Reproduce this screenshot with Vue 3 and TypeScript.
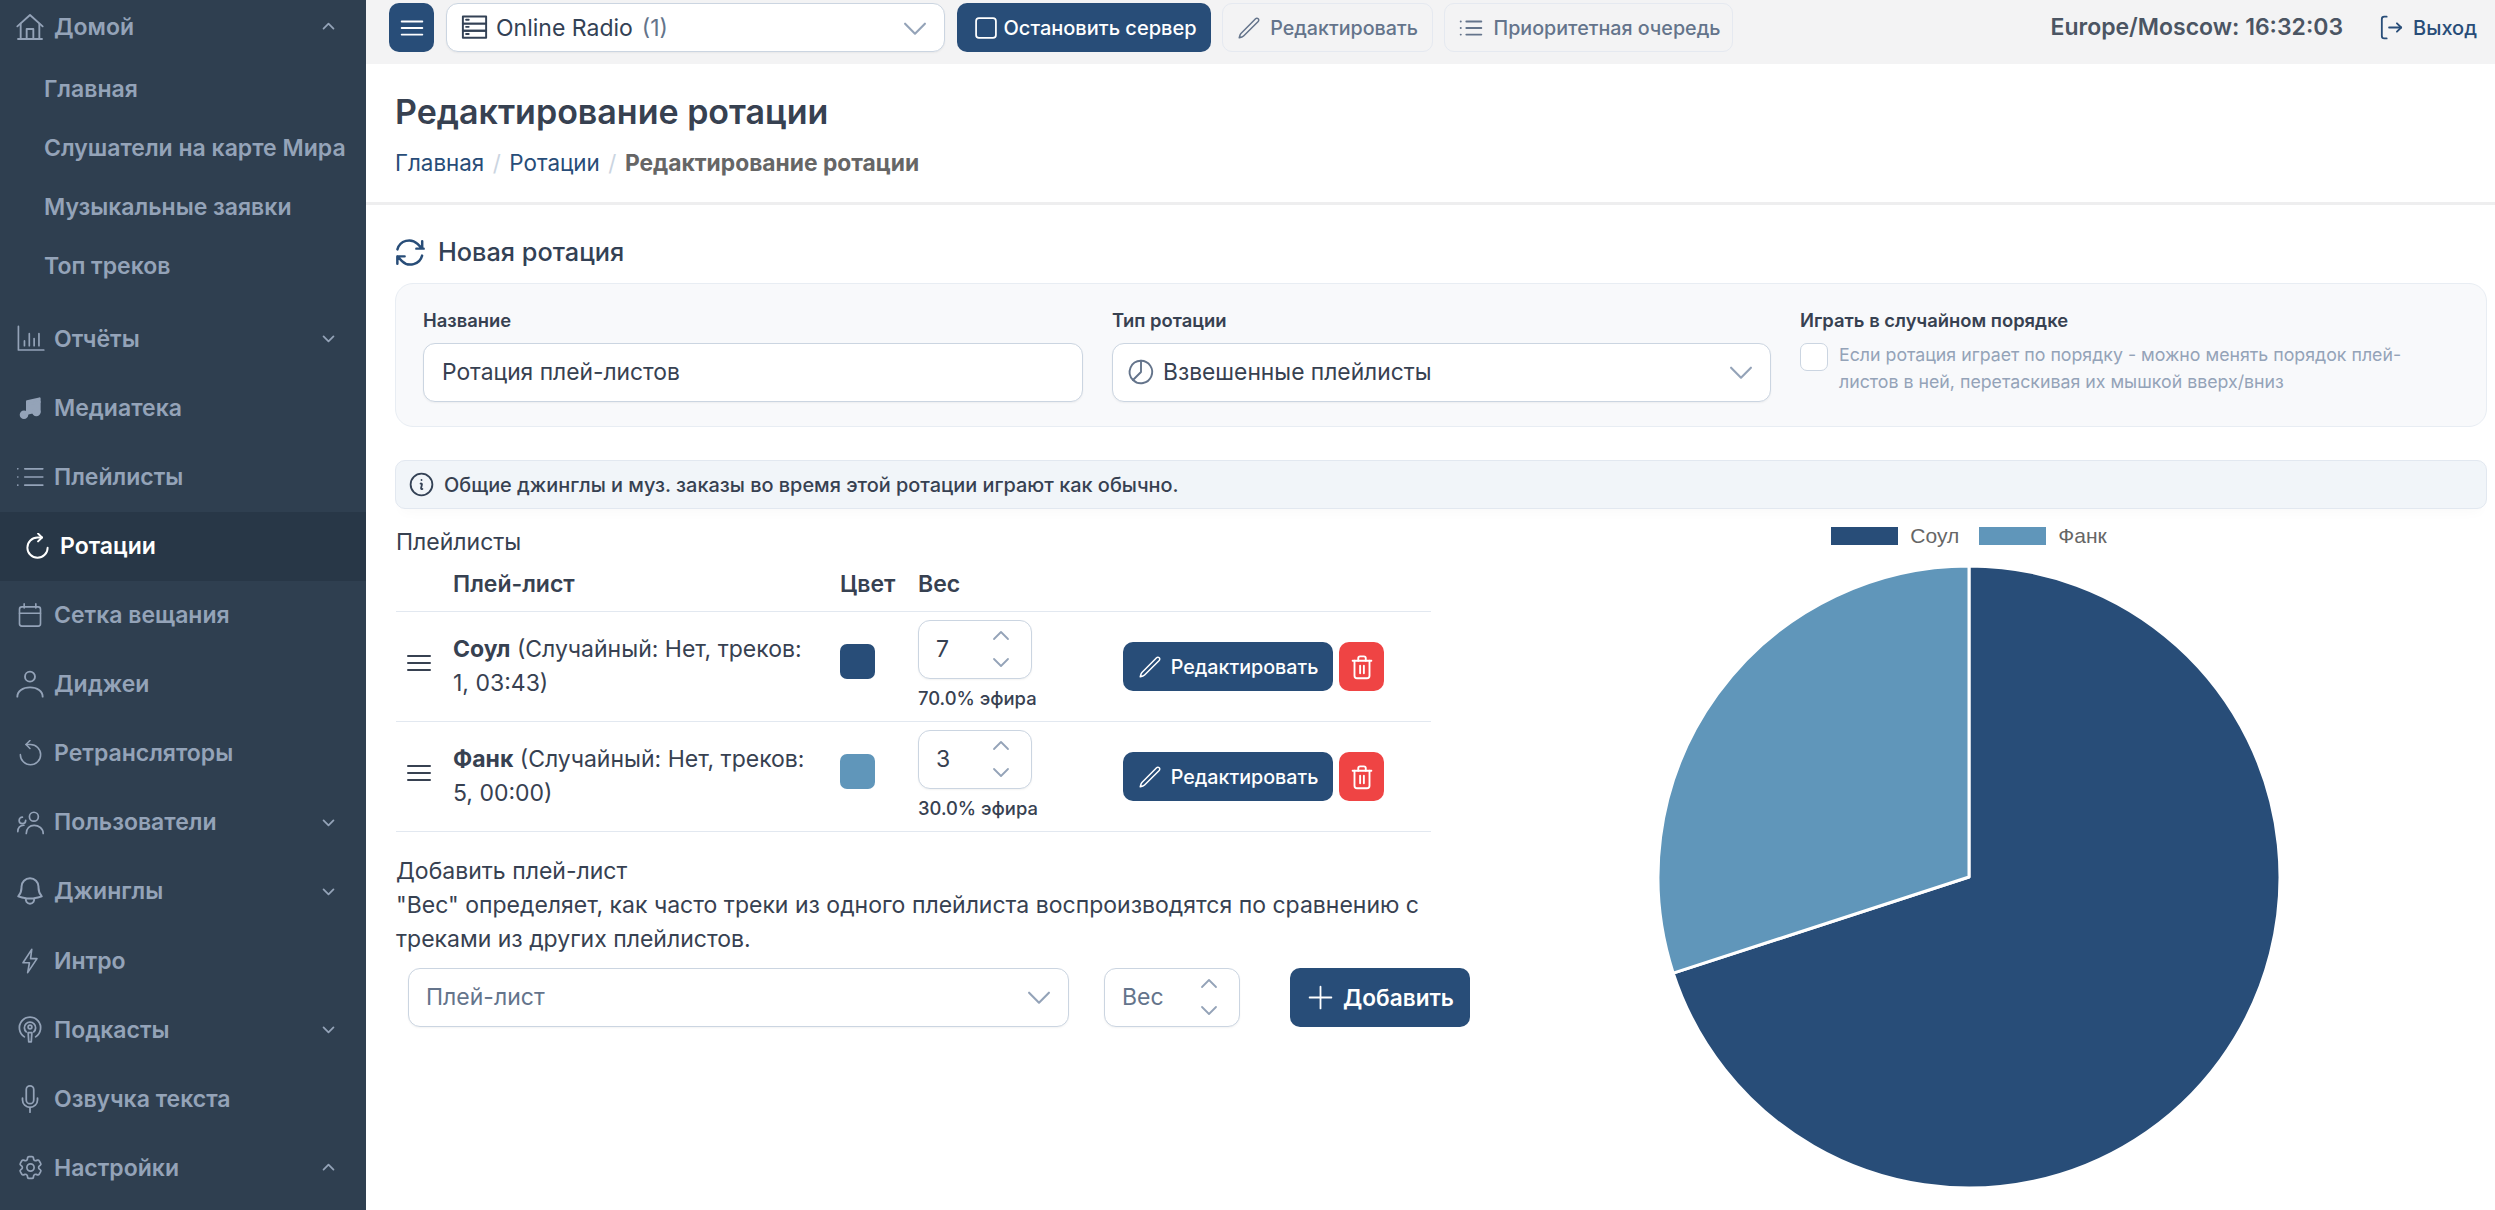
<script setup lang="ts">
type IconName = keyof typeof icons

const icons = {
  home: ['M2.5 11.5 12 3l9.5 8.5', 'M5 9.5V21h14V9.5', 'M3 21h18', 'M9.5 21v-7.5h5V21'],
  chart: ['M2 2v19.5h21', 'M7 14v4', 'M11 8v10', 'M15 12v6', 'M19 8v10'],
  list: ['M8.25 6.75h12M8.25 12h12m-12 5.25h12', 'M3.75 6.75h.1M3.75 12h.1M3.75 17.25h.1'],
  navlist: ['M7.5 5h15.5M7.5 12h15.5M7.5 19h15.5', 'M1.5 5h.1M1.5 12h.1M1.5 19h.1'],
  rotate: ['M16 4h-4a9 9 0 1 0 9 9', 'M12.5 .5 16 4l-3.5 3.5'],
  calendar: ['M7 2.5v3.5M17 2.5v3.5', 'M5 5h14a2 2 0 0 1 2 2v12.5a2 2 0 0 1-2 2H5a2 2 0 0 1-2-2V7a2 2 0 0 1 2-2Z', 'M3 10.5h18'],
  user: ['M15.75 6.5a3.75 3.75 0 1 1-7.5 0 3.75 3.75 0 0 1 7.5 0Z', 'M2.5 21.5c0-4 4-7 9.5-7s9.5 3 9.5 7'],
  replay: ['M8 4h4a9 9 0 1 1-9 9', 'M11.5 .5 8 4l3.5 3.5'],
  users: ['M18.5 7.2a3.7 3.7 0 1 1-7.4 0 3.7 3.7 0 0 1 7.4 0Z', 'M8.5 21c0-4 2.8-6.7 6.5-6.7s7.5 2.7 7.5 6.7', 'M8 10.3a2.7 2.7 0 1 1-2.7-2.7', 'M1.5 19.5c0-3 1.8-5 5-5.2'],
  bell: ['M14.857 17.082a23.848 23.848 0 0 0 5.454-1.31A8.967 8.967 0 0 1 18 9.75V9A6 6 0 0 0 6 9v.75a8.967 8.967 0 0 1-2.312 6.022c1.733.64 3.56 1.085 5.455 1.31m5.714 0a24.255 24.255 0 0 1-5.714 0m5.714 0a3 3 0 1 1-5.714 0'],
  bolt: ['M13.5 2 6 13.5h5.5L10 22l8-12h-5.5L13.5 2Z'],
  podcast: ['M7.5 17.5a8.5 8.5 0 1 1 9 0', 'M9 13.5a4.5 4.5 0 1 1 6 0', 'M13.5 9.5a1.5 1.5 0 1 1-3 0 1.5 1.5 0 0 1 3 0Z', 'M10.5 14h3l-.5 7.5h-2Z'],
  mic: ['M18 11.25v1.5a6 6 0 0 1-12 0v-1.5', 'M12 18.75v3.75', 'M12 15.75a3 3 0 0 1-3-3V4.5a3 3 0 1 1 6 0v8.25a3 3 0 0 1-3 3Z'],
  cog: ['M9.594 3.94c.09-.542.56-.94 1.11-.94h2.593c.55 0 1.02.398 1.11.94l.213 1.281c.063.374.313.686.645.87.074.04.147.083.22.127.325.196.72.257 1.075.124l1.217-.456a1.125 1.125 0 0 1 1.37.49l1.296 2.247a1.125 1.125 0 0 1-.26 1.431l-1.003.827c-.293.241-.438.613-.43.992a7.723 7.723 0 0 1 0 .255c-.008.378.137.75.43.991l1.004.827c.424.35.534.955.26 1.43l-1.298 2.247a1.125 1.125 0 0 1-1.369.491l-1.217-.456c-.355-.133-.75-.072-1.076.124a6.47 6.47 0 0 1-.22.128c-.331.183-.581.495-.644.869l-.213 1.281c-.09.543-.56.94-1.11.94h-2.594c-.55 0-1.019-.398-1.11-.94l-.213-1.281c-.062-.374-.312-.686-.644-.87a6.52 6.52 0 0 1-.22-.127c-.325-.196-.72-.257-1.076-.124l-1.217.456a1.125 1.125 0 0 1-1.369-.49l-1.297-2.247a1.125 1.125 0 0 1 .26-1.431l1.004-.827c.292-.24.437-.613.43-.991a6.932 6.932 0 0 1 0-.255c.007-.38-.138-.751-.43-.992l-1.004-.827a1.125 1.125 0 0 1-.26-1.43l1.297-2.247a1.125 1.125 0 0 1 1.37-.491l1.216.456c.356.133.751.072 1.076-.124.072-.044.146-.086.22-.128.332-.183.582-.495.644-.869l.214-1.28Z', 'M15 12a3 3 0 1 1-6 0 3 3 0 0 1 6 0Z'],
  music: ['M9 18.5V6.5l11-2.5v12', 'M9 9.5l11-2.5', 'M9 18.5a2.8 2.8 0 1 1-5.6 0 2.8 2.8 0 0 1 5.6 0Z', 'M20 16a2.8 2.8 0 1 1-5.6 0 2.8 2.8 0 0 1 5.6 0Z'],
  up: ['m5 15 7-7 7 7'],
  down: ['m5 9 7 7 7-7'],
  bars: ['M3.75 6.75h16.5M3.75 12h16.5M3.75 17.25h16.5'],
  server: ['M3 3.5h18v5.5H3Z', 'M3 9h18v5.5H3Z', 'M3 14.5h18V20H3Z', 'M5.5 6h2M5.5 11.5h2M5.5 17h2'],
  stop: ['M6 3.5h12A2.5 2.5 0 0 1 20.5 6v12a2.5 2.5 0 0 1-2.5 2.5H6A2.5 2.5 0 0 1 3.5 18V6A2.5 2.5 0 0 1 6 3.5Z'],
  pencil: ['M16.862 4.487l1.687-1.688a1.875 1.875 0 1 1 2.652 2.652L6.832 19.82a4.5 4.5 0 0 1-1.897 1.13l-2.685.8.8-2.685a4.5 4.5 0 0 1 1.13-1.897L16.863 4.487Z'],
  logout: ['M8 3H6a2 2 0 0 0-2 2v14a2 2 0 0 0 2 2h2', 'M10 12h10', 'M16.5 8.5 20 12l-3.5 3.5'],
  sync: ['M16.023 9.348h4.992M20.015 4.356v4.99l-3.181-3.182a8.25 8.25 0 0 0-13.803 3.7', 'M2.985 19.644v-4.992h4.992m-4.993 0 3.181 3.183a8.25 8.25 0 0 0 13.803-3.7'],
  pie: ['M12 3a9 9 0 1 1-6.4 15.4A9 9 0 0 1 12 3Z', 'M12 3v9l-6.4 6.4'],
  info: ['M11.25 11.25l.041-.02a.75.75 0 0 1 1.063.852l-.708 2.836a.75.75 0 0 0 1.063.853l.041-.021', 'M21 12a9 9 0 1 1-18 0 9 9 0 0 1 18 0Z', 'M12 8.25h.01'],
  trash: ['M4.5 7h15', 'M9 7V5a1.5 1.5 0 0 1 1.5-1.5h3A1.5 1.5 0 0 1 15 5v2', 'M6 7v12a2 2 0 0 0 2 2h8a2 2 0 0 0 2-2V7', 'M10.5 11v6', 'M13.5 11v6'],
  plus: ['M12 3v18M3 12h18'],
}

interface NavItem {
  label: string
  icon: IconName
  size: number
  caret?: 'up' | 'down'
  active?: boolean
  children?: string[]
}

const nav: NavItem[] = [
  { label: 'Домой', icon: 'home', size: 32, caret: 'up', children: ['Главная', 'Слушатели на карте Мира', 'Музыкальные заявки', 'Топ треков'] },
  { label: 'Отчёты', icon: 'chart', size: 29, caret: 'down' },
  { label: 'Медиатека', icon: 'music', size: 27 },
  { label: 'Плейлисты', icon: 'navlist', size: 28 },
  { label: 'Ротации', icon: 'rotate', size: 27, active: true },
  { label: 'Сетка вещания', icon: 'calendar', size: 28 },
  { label: 'Диджеи', icon: 'user', size: 32 },
  { label: 'Ретрансляторы', icon: 'replay', size: 27 },
  { label: 'Пользователи', icon: 'users', size: 29, caret: 'down' },
  { label: 'Джинглы', icon: 'bell', size: 34, caret: 'down' },
  { label: 'Интро', icon: 'bolt', size: 28 },
  { label: 'Подкасты', icon: 'podcast', size: 30, caret: 'down' },
  { label: 'Озвучка текста', icon: 'mic', size: 30 },
  { label: 'Настройки', icon: 'cog', size: 29, caret: 'up' },
]

const playlists = [
  { name: 'Соул', info: '(Случайный: Нет, треков: 1, 03:43)', color: '#284d78', weight: 7, share: '70.0% эфира' },
  { name: 'Фанк', info: '(Случайный: Нет, треков: 5, 00:00)', color: '#6096ba', weight: 3, share: '30.0% эфира' },
]

const total = playlists.reduce((sum, p) => sum + p.weight, 0)
const R = 311
const slices = (() => {
  let start = 0
  return playlists.map((p) => {
    const end = start + (p.weight / total) * Math.PI * 2
    const point = (a: number) => `${R * Math.sin(a)} ${-R * Math.cos(a)}`
    const large = end - start > Math.PI ? 1 : 0
    const d = `M0 0L${point(start)}A${R} ${R} 0 ${large} 1 ${point(end)}Z`
    start = end
    return { d, color: p.color, name: p.name }
  })
})()
</script>

<template>
  <div class="app">
    <aside class="sidebar">
      <nav class="nav">
        <template v-for="item in nav" :key="item.label">
          <div class="nav-item" :class="{ active: item.active }">
            <span class="nav-slot">
              <svg :class="{ solid: item.icon === 'music' }" :style="{ width: item.size + 'px', height: item.size + 'px' }" viewBox="0 0 24 24"><path v-for="d in icons[item.icon]" :key="d" :d="d" /></svg>
            </span>
            <span class="nav-label">{{ item.label }}</span>
            <svg v-if="item.caret" class="nav-caret" viewBox="0 0 24 24"><path v-for="d in icons[item.caret]" :key="d" :d="d" /></svg>
          </div>
          <div v-if="item.children" class="subnav">
            <div v-for="child in item.children" :key="child" class="sub-item">{{ child }}</div>
          </div>
        </template>
      </nav>
    </aside>

    <main class="main">
      <header class="topbar">
        <button class="btn primary burger"><svg class="ic30" viewBox="0 0 24 24"><path v-for="d in icons.bars" :key="d" :d="d" /></svg></button>
        <div class="top-select">
          <svg class="ic31 dark" viewBox="0 0 24 24"><path v-for="d in icons.server" :key="d" :d="d" /></svg>
          <span class="station">Online Radio</span>
          <span class="station-count">(1)</span>
          <svg class="chev" viewBox="0 0 24 24"><path v-for="d in icons.down" :key="d" :d="d" /></svg>
        </div>
        <button class="btn primary stop"><svg class="ic28" viewBox="0 0 24 24"><path v-for="d in icons.stop" :key="d" :d="d" /></svg>Остановить сервер</button>
        <button class="btn ghost edit"><svg class="ic24" viewBox="0 0 24 24"><path v-for="d in icons.pencil" :key="d" :d="d" /></svg>Редактировать</button>
        <button class="btn ghost queue"><svg class="ic30" viewBox="0 0 24 24"><path v-for="d in icons.list" :key="d" :d="d" /></svg>Приоритетная очередь</button>
        <div class="clock">Europe/Moscow: 16:32:03</div>
        <a class="logout"><svg class="ic29" viewBox="0 0 24 24"><path v-for="d in icons.logout" :key="d" :d="d" /></svg>Выход</a>
      </header>

      <section class="page-head">
        <h1>Редактирование ротации</h1>
        <div class="crumbs">
          <a>Главная</a><i>/</i><a>Ротации</a><i>/</i><b>Редактирование ротации</b>
        </div>
      </section>

      <section class="card">
        <h2><svg class="sync" viewBox="0 0 24 24"><path v-for="d in icons.sync" :key="d" :d="d" /></svg>Новая ротация</h2>

        <div class="panel">
          <div class="field">
            <label>Название</label>
            <div class="control">Ротация плей-листов</div>
          </div>
          <div class="field">
            <label>Тип ротации</label>
            <div class="control select pie-select">
              <svg class="ic30 slate" viewBox="0 0 24 24"><path v-for="d in icons.pie" :key="d" :d="d" /></svg>
              <span>Взвешенные плейлисты</span>
              <svg class="chev" viewBox="0 0 24 24"><path v-for="d in icons.down" :key="d" :d="d" /></svg>
            </div>
          </div>
          <div class="field">
            <label>Играть в случайном порядке</label>
            <div class="check-row">
              <span class="check"></span>
              <p>Если ротация играет по порядку - можно менять порядок плей-листов в ней, перетаскивая их мышкой вверх/вниз</p>
            </div>
          </div>
        </div>

        <div class="alert"><svg class="ic29 info" viewBox="0 0 24 24"><path v-for="d in icons.info" :key="d" :d="d" /></svg>Общие джинглы и муз. заказы во время этой ротации играют как обычно.</div>

        <div class="columns">
          <div class="left">
            <div class="caption">Плейлисты</div>
            <div class="table">
              <div class="row head">
                <span></span><span>Плей-лист</span><span>Цвет</span><span>Вес</span><span></span>
              </div>
              <div v-for="p in playlists" :key="p.name" class="row body">
                <svg class="drag" viewBox="0 0 24 24"><path v-for="d in icons.bars" :key="d" :d="d" /></svg>
                <div class="pl-name"><b>{{ p.name }}</b> {{ p.info }}</div>
                <span class="swatch" :style="{ background: p.color }"></span>
                <div class="weight">
                  <div class="number">
                    <span>{{ p.weight }}</span>
                    <div class="spin">
                      <svg viewBox="0 0 24 24"><path v-for="d in icons.up" :key="d" :d="d" /></svg>
                      <svg viewBox="0 0 24 24"><path v-for="d in icons.down" :key="d" :d="d" /></svg>
                    </div>
                  </div>
                  <small>{{ p.share }}</small>
                </div>
                <div class="actions">
                  <button class="btn primary row-edit"><svg class="ic24" viewBox="0 0 24 24"><path v-for="d in icons.pencil" :key="d" :d="d" /></svg>Редактировать</button>
                  <button class="btn danger"><svg class="ic30" viewBox="0 0 24 24"><path v-for="d in icons.trash" :key="d" :d="d" /></svg></button>
                </div>
              </div>
            </div>

            <div class="add-title">Добавить плей-лист</div>
            <p class="hint">"Вес" определяет, как часто треки из одного плейлиста воспроизводятся по сравнению с треками из других плейлистов.</p>
            <div class="add-form">
              <div class="control select add-select">
                <span class="placeholder">Плей-лист</span>
                <svg class="chev" viewBox="0 0 24 24"><path v-for="d in icons.down" :key="d" :d="d" /></svg>
              </div>
              <div class="number add-number">
                <span class="placeholder">Вес</span>
                <div class="spin">
                  <svg viewBox="0 0 24 24"><path v-for="d in icons.up" :key="d" :d="d" /></svg>
                  <svg viewBox="0 0 24 24"><path v-for="d in icons.down" :key="d" :d="d" /></svg>
                </div>
              </div>
              <button class="btn primary add-btn"><svg class="ic29" viewBox="0 0 24 24"><path v-for="d in icons.plus" :key="d" :d="d" /></svg>Добавить</button>
            </div>
          </div>

          <div class="chart">
            <div class="legend">
              <span v-for="p in playlists" :key="p.name" class="legend-item"><i :style="{ background: p.color }"></i>{{ p.name }}</span>
            </div>
            <svg class="pie" viewBox="-314 -314 628 628">
              <path v-for="s in slices" :key="s.name" :d="s.d" :fill="s.color" stroke="#fff" stroke-width="3" />
            </svg>
          </div>
        </div>
      </section>
    </main>
  </div>
</template>

<style>
html, body { margin: 0; background: #fff; overflow: hidden; }
</style>

<style scoped>
* { box-sizing: border-box; }
svg { fill: none; stroke: currentColor; stroke-width: 1.5; stroke-linecap: round; stroke-linejoin: round; flex: none; }
p, h1, h2 { margin: 0; }

.app { display: flex; width: 2495px; height: 1210px; overflow: hidden; font-family: Inter, "Noto Sans", sans-serif; color: #374151; }

.sidebar { width: 366px; flex: none; background: #2f3f50; overflow: hidden; }
.nav { margin-top: -8px; }
.nav-item { height: 69.08px; display: flex; align-items: center; padding: 0 29px 0 17px; color: #94a3b8; font-size: 23px; font-weight: 600; }
.nav-slot { width: 26px; height: 26px; margin-right: 11px; display: flex; align-items: center; justify-content: center; flex: none; }
.nav-slot svg { stroke-width: 1.4; display: block; }
.nav-slot svg.solid path { fill: currentColor; stroke-width: 2; }
.nav-label { flex: 1; }
.nav-caret { width: 17px; height: 17px; stroke-width: 2.5; }
.nav-item.active { background: #283747; color: #fff; padding-left: 24px; }
.nav-item.active .nav-slot { margin-right: 10px; }
.nav-item.active .nav-slot svg { stroke-width: 1.7; }
.subnav { margin-top: -1px; padding-bottom: 9px; }
.sub-item { height: 58.8px; display: flex; align-items: center; padding-left: 44px; color: #94a3b8; font-size: 23px; font-weight: 600; }

.main { flex: 1; min-width: 0; }

.topbar { height: 64px; background: #f3f3f4; display: flex; align-items: flex-start; padding: 3px 18px 0 23px; }
.btn { display: inline-flex; align-items: center; justify-content: center; border: 1px solid transparent; border-radius: 10px; font: inherit; }
.btn.primary { background: #284d78; color: #fff; }
.btn.ghost { background: #f3f3f4; border-color: #e5e9f0; color: #64748b; font-weight: 500; }
.btn.danger { background: #ef4444; color: #fff; width: 45px; height: 49px; }
.burger { width: 45px; height: 49px; margin-right: 12px; }
.top-select { width: 499px; height: 49px; background: #fff; border: 1px solid #cbd5e1; border-radius: 12px; display: flex; align-items: center; padding: 0 12px 0 12px; box-shadow: 0 1px 2px rgba(0,0,0,.05); color: #334155; font-size: 23px; }
.station { margin-left: 6px; }
.station-count { margin-left: 9px; color: #64748b; }
.chev { margin-left: auto; width: 34px; height: 34px; color: #94a3b8; }
.stop { width: 254px; height: 49px; margin-left: 12px; font-size: 20px; font-weight: 500; gap: 4px; }
.edit { width: 211px; height: 49px; margin-left: 11px; font-size: 19.7px; gap: 9px; }
.queue { width: 289px; height: 49px; margin-left: 11px; font-size: 19.7px; gap: 7px; }
.clock { margin-left: auto; font-size: 23px; font-weight: 600; color: #4b5563; line-height: 49px; }
.logout { display: flex; align-items: center; gap: 7px; height: 49px; margin-left: 34px; color: #284d78; font-size: 20px; font-weight: 500; }
.ic24 { width: 24px; height: 24px; }
.ic28 { width: 28px; height: 28px; }
.ic29 { width: 29px; height: 29px; }
.ic30 { width: 30px; height: 30px; }
.ic31 { width: 31px; height: 31px; }
.dark { color: #334155; }
.slate { color: #64748b; }
.info { color: #334155; }

.page-head { height: 138px; padding: 28px 29px 0; background: #fff; }
h1 { font-size: 34px; font-weight: 600; line-height: 40px; color: #374151; }
.crumbs { display: flex; align-items: center; margin-top: 15px; font-size: 22.4px; line-height: 32px; color: #284d78; }
.crumbs i { margin: 0 8.5px; color: #cbd5e1; font-style: normal; }
.crumbs b { font-weight: 700; font-size: 22.8px; color: #666; }

.card { border-top: 3px solid #eeeeef; padding: 27px 8px 0 29px; }
h2 { display: flex; align-items: center; gap: 10px; font-size: 25.3px; font-weight: 500; line-height: 40px; color: #334155; }
.sync { width: 35px; height: 35px; margin-left: -2px; color: #284d78; stroke-width: 1.7; }

.panel { margin-top: 11px; height: 144px; background: #f8f9fb; border: 1px solid #e8edf3; border-radius: 18px; display: grid; grid-template-columns: 660px 659px 1fr; column-gap: 29px; padding: 24px 27px 0; }
.field label { display: block; font-size: 18.4px; font-weight: 600; line-height: 24px; color: #374151; margin-bottom: 11px; }
.control { height: 59px; background: #fff; border: 1px solid #cbd5e1; border-radius: 12px; display: flex; align-items: center; padding: 0 17px 2px 18px; font-size: 22.8px; color: #374151; box-shadow: 0 1px 2px rgba(0,0,0,.05); }
.select { gap: 7px; padding-right: 12px; }
.pie-select { padding-left: 13px; }
.check-row { display: flex; gap: 11px; }
.check { width: 28px; height: 28px; background: #fff; border: 1px solid #cbd5e1; border-radius: 7px; flex: none; }
.check-row p { font-size: 17.75px; line-height: 27px; color: #94a3b8; margin-top: -2px; width: 580px; }

.alert { margin-top: 33px; height: 49px; background: #f1f5f9; border: 1px solid #e2e8f0; border-radius: 10px; display: flex; align-items: center; gap: 8px; padding-left: 11px; font-size: 19.9px; font-weight: 500; color: #374151; box-shadow: 0 10px 12px -6px rgba(0,0,0,.025); }

.columns { display: flex; }
.left { width: 1100px; flex: none; padding: 16px 0 0 1px; }
.caption { font-size: 23px; line-height: 34px; color: #374151; }
.table { width: 1035px; }
.row { display: grid; grid-template-columns: 57px 387px 78px 205px 1fr; }
.head { height: 53px; align-items: center; padding-bottom: 2px; border-bottom: 1px solid #e2e8f0; font-size: 23px; font-weight: 600; color: #374151; }
.body { height: 110px; align-items: center; border-bottom: 1px solid #e2e8f0; }
.drag { width: 32px; height: 32px; margin-left: 7px; margin-bottom: 8px; color: #374151; }
.pl-name { font-size: 23px; line-height: 34px; color: #374151; width: 362px; padding-bottom: 2px; }
.pl-name b { font-weight: 700; }
.swatch { width: 35px; height: 35px; border-radius: 7px; margin-bottom: 10px; }
.weight { align-self: start; padding-top: 8px; }
.number { position: relative; width: 114px; height: 59px; background: #fff; border: 1px solid #cbd5e1; border-radius: 12px; display: flex; align-items: center; padding: 0 0 2px 17px; font-size: 23px; color: #374151; box-shadow: 0 1px 2px rgba(0,0,0,.05); }
.spin { position: absolute; right: 18px; top: 3px; display: flex; flex-direction: column; gap: 2px; color: #94a3b8; }
.spin svg { display: block; width: 24px; height: 24px; stroke-width: 1.8; }
.weight small { display: block; margin-top: 7px; font-size: 18.4px; font-weight: 500; line-height: 24px; color: #374151; white-space: nowrap; }
.actions { display: flex; gap: 6px; }
.row-edit { width: 210px; height: 49px; font-size: 19.7px; font-weight: 500; gap: 9px; }

.add-title { margin-top: 22px; font-size: 23px; line-height: 34px; color: #374151; }
.hint { width: 1060px; font-size: 23px; line-height: 34px; color: #374151; }
.add-form { display: flex; align-items: flex-start; margin-top: 12px; padding-left: 12px; }
.add-select { width: 661px; height: 59px; padding-left: 17px; }
.placeholder { color: #64748b; font-size: 23px; }
.add-number { width: 136px; margin-left: 35px; }
.add-btn { width: 180px; height: 59px; margin-left: 50px; font-size: 22.6px; font-weight: 600; gap: 8px; }

.chart { flex: 1; display: flex; flex-direction: column; align-items: center; padding-right: 44px; }
.legend { display: flex; gap: 20px; height: 54px; padding-top: 18px; font-family: "Liberation Sans", Arial, sans-serif; font-size: 21px; line-height: 18px; color: #666; }
.legend-item { display: flex; align-items: center; gap: 12px; height: 18px; }
.legend-item i { width: 67px; height: 18px; display: block; }
.pie { width: 628px; height: 628px; display: block; }
</style>
